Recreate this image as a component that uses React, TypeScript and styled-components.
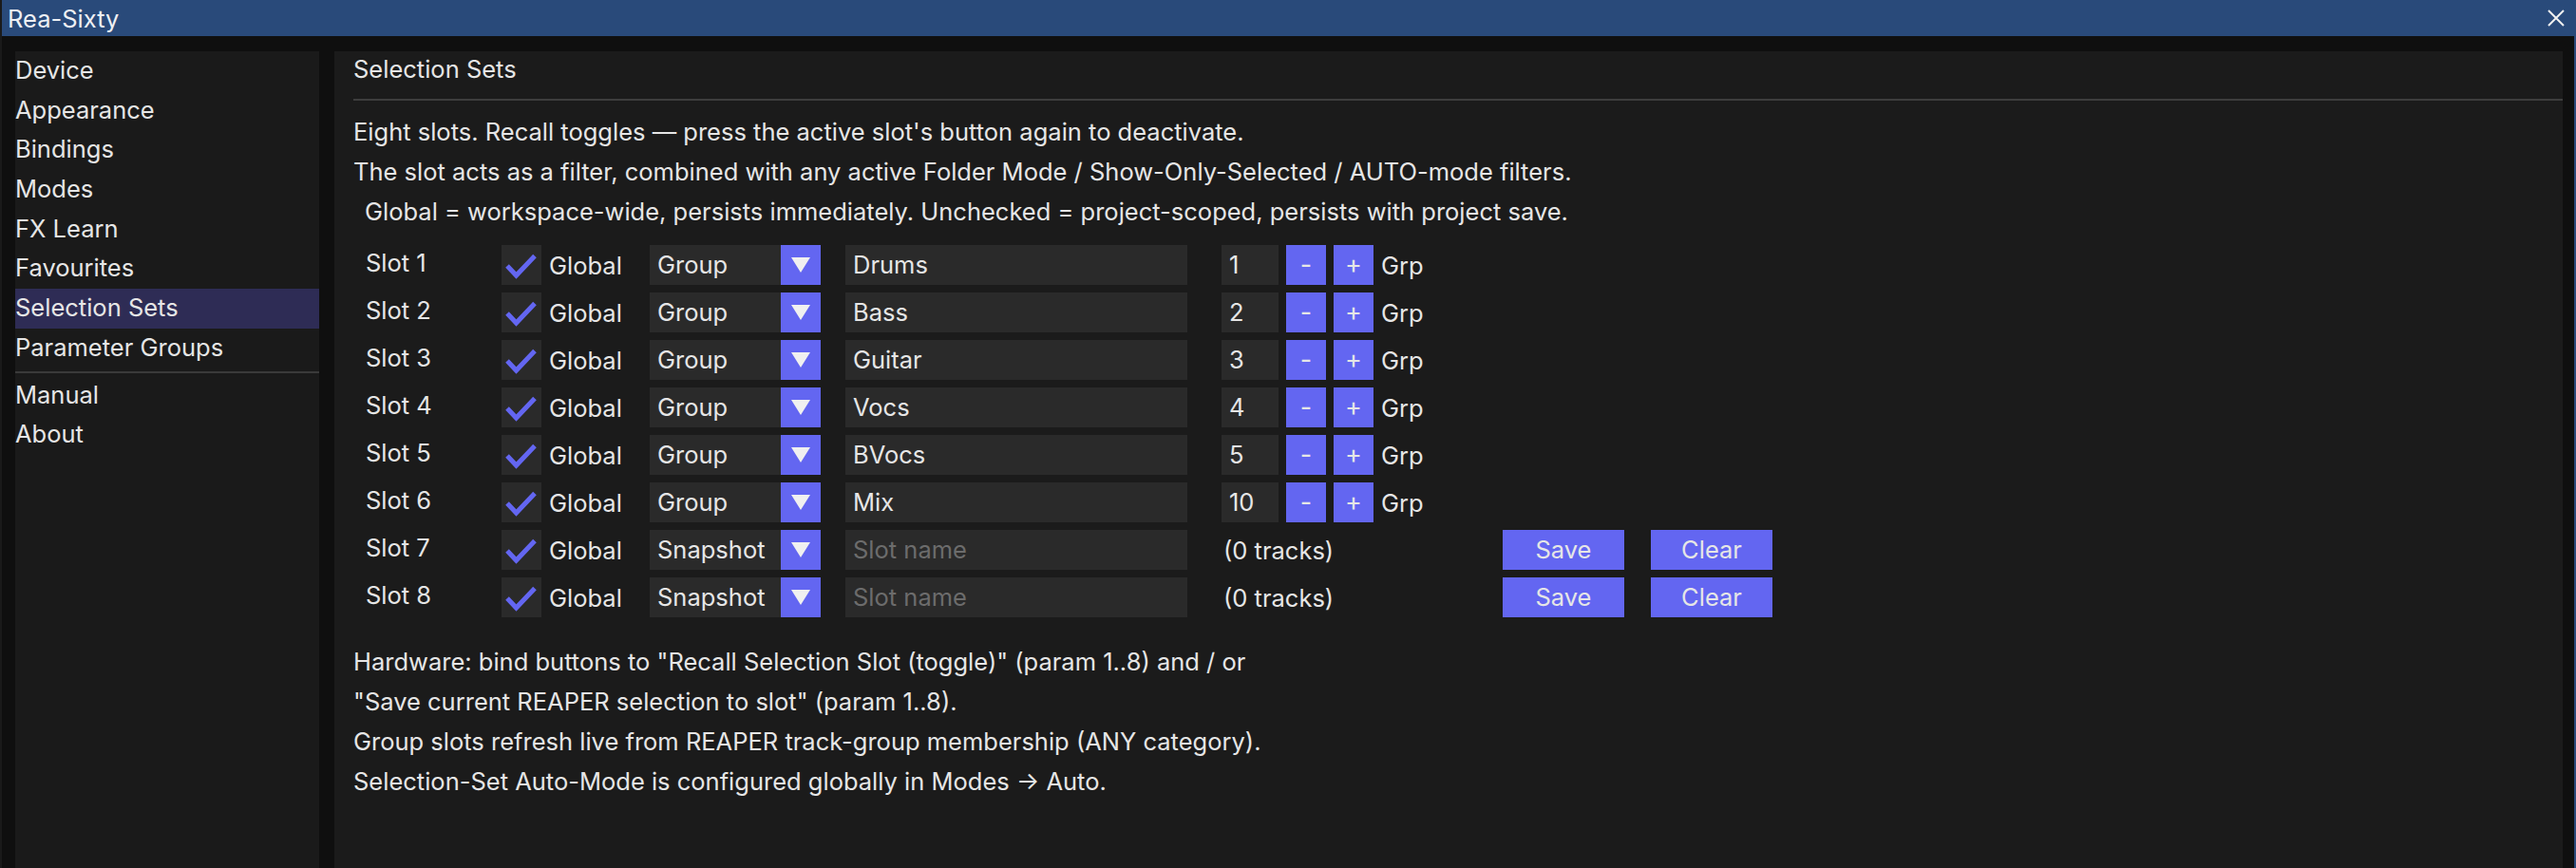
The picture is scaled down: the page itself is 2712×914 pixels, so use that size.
import React from "react";
import styled, { createGlobalStyle } from "styled-components";

const GlobalStyle = createGlobalStyle`
  html, body {
    margin: 0;
    padding: 0;
    background: #0f0f0f;
  }
  body {
    font-family: Inter, "Noto Sans", "Liberation Sans", sans-serif;
    color: #e6e6e6;
    font-size: 25.5px;
  }
`;

const ACCENT = "#6366f1";

const NAV = [
  "Device",
  "Appearance",
  "Bindings",
  "Modes",
  "FX Learn",
  "Favourites",
  "Selection Sets",
  "Parameter Groups",
];
const NAV_EXTRA = ["Manual", "About"];

type Slot = {
  mode: "Group" | "Snapshot";
  name: string;
  group?: number;
};

const SLOTS: Slot[] = [
  { mode: "Group", name: "Drums", group: 1 },
  { mode: "Group", name: "Bass", group: 2 },
  { mode: "Group", name: "Guitar", group: 3 },
  { mode: "Group", name: "Vocs", group: 4 },
  { mode: "Group", name: "BVocs", group: 5 },
  { mode: "Group", name: "Mix", group: 10 },
  { mode: "Snapshot", name: "" },
  { mode: "Snapshot", name: "" },
];

export default function App() {
  return (
    <>
      <GlobalStyle />
      <Window>
        <TitleBar>
          <TitleText>Rea-Sixty</TitleText>
          <CloseIcon viewBox="0 0 18 18">
            <path d="M1 1 L17 17 M17 1 L1 17" stroke="#f0f0f0" strokeWidth="2" />
          </CloseIcon>
        </TitleBar>
        <Body>
          <Sidebar>
            {NAV.map((item) => (
              <NavItem key={item} $active={item === "Selection Sets"}>
                {item}
              </NavItem>
            ))}
            <NavDivider />
            {NAV_EXTRA.map((item) => (
              <NavItem key={item}>{item}</NavItem>
            ))}
          </Sidebar>
          <Main>
            <Heading>Selection Sets</Heading>
            <Rule />
            <Intro>
              <Line>
                Eight slots. Recall toggles — press the active slot's button
                again to deactivate.
              </Line>
              <Line>
                The slot acts as a filter, combined with any active Folder Mode
                / Show-Only-Selected / AUTO-mode filters.
              </Line>
              <Line $indent>
                Global = workspace-wide, persists immediately. Unchecked =
                project-scoped, persists with project save.
              </Line>
            </Intro>
            <SlotTable>
              {SLOTS.map((slot, i) => (
                <SlotRow key={i} slot={slot} index={i + 1} />
              ))}
            </SlotTable>
            <Notes>
              <Line>
                Hardware: bind buttons to "Recall Selection Slot (toggle)"
                (param 1..8) and / or
              </Line>
              <Line>"Save current REAPER selection to slot" (param 1..8).</Line>
              <Line>
                Group slots refresh live from REAPER track-group membership
                (ANY category).
              </Line>
              <Line>
                Selection-Set Auto-Mode is configured globally in Modes → Auto.
              </Line>
            </Notes>
          </Main>
        </Body>
      </Window>
    </>
  );
}

function SlotRow({ slot, index }: { slot: Slot; index: number }) {
  return (
    <Row>
      <SlotLabel>Slot {index}</SlotLabel>
      <CheckBox>
        <svg viewBox="0 0 42 42" width="42" height="42">
          <polyline
            points="6,22 15.5,32 35,11.5"
            fill="none"
            stroke={ACCENT}
            strokeWidth="5"
            strokeLinejoin="miter"
          />
        </svg>
      </CheckBox>
      <CheckLabel>Global</CheckLabel>
      <Combo>
        <ComboValue>{slot.mode}</ComboValue>
        <ComboArrow>
          <svg viewBox="0 0 42 42" width="42" height="42">
            <polygon points="11,13 31,13 21,29" fill="#f0f0f0" />
          </svg>
        </ComboArrow>
      </Combo>
      <NameInput $empty={!slot.name}>{slot.name || "Slot name"}</NameInput>
      {slot.mode === "Group" ? (
        <GroupControls>
          <NumberBox>{slot.group}</NumberBox>
          <SmallButton>-</SmallButton>
          <SmallButton>+</SmallButton>
          <span>Grp</span>
        </GroupControls>
      ) : (
        <SnapshotControls>
          <TrackCount>(0 tracks)</TrackCount>
          <ActionButton>Save</ActionButton>
          <ActionButton>Clear</ActionButton>
        </SnapshotControls>
      )}
    </Row>
  );
}

const Window = styled.div`
  width: 2712px;
  height: 914px;
  display: flex;
  flex-direction: column;
  overflow: hidden;
  background: #0f0f0f;
  border-right: 2px solid #2b4a7a;
  border-left: 2px solid #1a1a1a;
  box-sizing: border-box;
`;

const TitleBar = styled.div`
  height: 38px;
  flex-shrink: 0;
  background: #294a7a;
  display: flex;
  align-items: center;
  justify-content: space-between;
  padding: 0 12px 0 8px;
  margin: 0 -2px;
`;

const TitleText = styled.span`
  font-size: 25.5px;
  color: #eef0f4;
`;

const CloseIcon = styled.svg`
  width: 18px;
  height: 18px;
`;

const Body = styled.div`
  flex: 1;
  display: flex;
  gap: 16px;
  padding: 16px 12px 0 14px;
  min-height: 0;
`;

const Sidebar = styled.div`
  width: 320px;
  flex-shrink: 0;
  background: #1a1a1a;
  display: flex;
  flex-direction: column;
`;

const NavItem = styled.div<{ $active?: boolean }>`
  height: 41.7px;
  line-height: 40px;
  white-space: nowrap;
  background: ${(p) => (p.$active ? "#2e2c55" : "transparent")};
`;

const NavDivider = styled.div`
  height: 2px;
  background: #3a3a3a;
  margin: 3px 0;
`;

const Main = styled.div`
  flex: 1;
  background: #1b1b1b;
  padding: 0 0 0 20px;
  display: flex;
  flex-direction: column;
`;

const Heading = styled.div`
  height: 38px;
  line-height: 38px;
`;

const Rule = styled.div`
  height: 2px;
  background: #3d3d3d;
  margin-top: 12px;
`;

const Intro = styled.div`
  margin-top: 12px;
`;

const Line = styled.div<{ $indent?: boolean }>`
  height: 42px;
  line-height: 42px;
  white-space: nowrap;
  padding-left: ${(p) => (p.$indent ? "12px" : "0")};
`;

const SlotTable = styled.div`
  margin-top: 14px;
  padding-left: 13px;
  display: flex;
  flex-direction: column;
  gap: 8px;
`;

const Row = styled.div`
  height: 42px;
  display: flex;
  align-items: center;
`;

const SlotLabel = styled.div`
  width: 143px;
  align-self: flex-start;
  line-height: 38px;
`;

const CheckBox = styled.div`
  width: 42px;
  height: 42px;
  background: #2a2a2a;
  display: flex;
`;

const CheckLabel = styled.div`
  width: 106px;
  margin-left: 8px;
`;

const Combo = styled.div`
  width: 180px;
  height: 42px;
  display: flex;
  background: #2a2a2a;
`;

const ComboValue = styled.div`
  flex: 1;
  padding-left: 8px;
  line-height: 42px;
`;

const ComboArrow = styled.div`
  width: 42px;
  height: 42px;
  background: ${ACCENT};
`;

const NameInput = styled.div<{ $empty?: boolean }>`
  width: 360px;
  height: 42px;
  margin-left: 26px;
  padding-left: 8px;
  box-sizing: border-box;
  line-height: 42px;
  background: #2a2a2a;
  color: ${(p) => (p.$empty ? "#6c6c6c" : "#e6e6e6")};
`;

const GroupControls = styled.div`
  margin-left: 36px;
  display: flex;
  align-items: center;
  gap: 8px;
`;

const NumberBox = styled.div`
  width: 60px;
  height: 42px;
  line-height: 42px;
  padding-left: 8px;
  box-sizing: border-box;
  background: #2a2a2a;
`;

const SmallButton = styled.div`
  width: 42px;
  height: 42px;
  line-height: 42px;
  text-align: center;
  font-size: 27px;
  background: ${ACCENT};
`;

const SnapshotControls = styled.div`
  margin-left: 38px;
  display: flex;
  align-items: center;
`;

const TrackCount = styled.div`
  width: 294px;
`;

const ActionButton = styled.div`
  width: 128px;
  height: 42px;
  line-height: 42px;
  text-align: center;
  background: ${ACCENT};
  & + & {
    margin-left: 28px;
  }
`;

const Notes = styled.div`
  margin-top: 26px;
`;
